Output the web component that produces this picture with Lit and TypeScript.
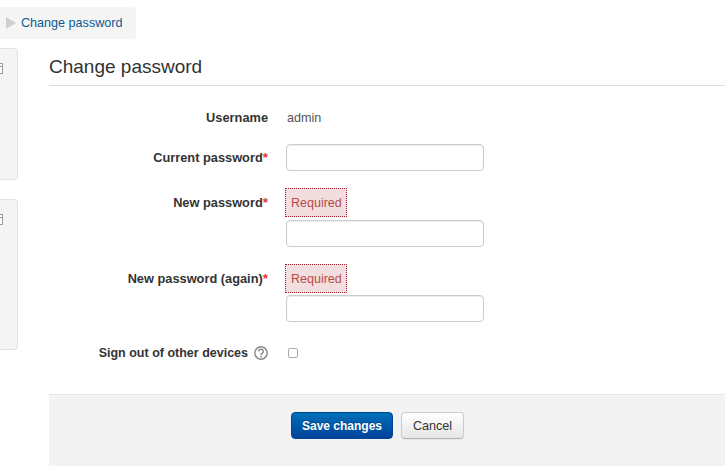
import { LitElement, html, css } from 'lit';
import { customElement } from 'lit/decorators.js';

@customElement('app-root')
export class AppRoot extends LitElement {
  static styles = css`
    :host {
      display: block;
      width: 725px;
      height: 472px;
      overflow: hidden;
      background: #fff;
      font-family: 'Liberation Sans', Arial, sans-serif;
      font-size: 12.6px;
      color: #333;
    }
    .breadcrumb {
      display: flex;
      align-items: center;
      box-sizing: border-box;
      width: 136px;
      height: 32px;
      margin-top: 7px;
      padding-left: 6px;
      background: #f5f5f5;
      border-radius: 0 4px 4px 0;
    }
    .breadcrumb .arrow {
      width: 0;
      height: 0;
      border-left: 10px solid #d0d0d0;
      border-top: 6px solid transparent;
      border-bottom: 6px solid transparent;
      margin-right: 5px;
    }
    .breadcrumb a {
      color: #0a5a96;
      text-decoration: none;
    }
    .page {
      display: grid;
      grid-template-columns: 18px 1fr;
      column-gap: 31px;
      margin-top: 9px;
    }
    .side {
      display: flex;
      flex-direction: column;
      gap: 19px;
    }
    .block {
      position: relative;
      box-sizing: border-box;
      background: #f4f4f4;
      border: 1px solid #e3e3e3;
      border-left: none;
      border-radius: 0 4px 4px 0;
    }
    .block.first { height: 132px; }
    .block.second { height: 151px; }
    .block svg {
      position: absolute;
      left: -5px;
      top: 14px;
    }
    h2 {
      margin: 0;
      height: 38px;
      box-sizing: border-box;
      padding-top: 7px;
      font-size: 19px;
      font-weight: 400;
      line-height: 23px;
      color: #333;
      border-bottom: 1px solid #ddd;
    }
    .row {
      display: grid;
      grid-template-columns: 219px 198px;
      column-gap: 18px;
    }
    .row label {
      text-align: right;
      font-size: 12.8px;
      font-weight: 700;
      line-height: 18px;
    }
    .req { color: #e33; font-weight: 700; font-size: 13.5px; }
    .username { margin-top: 23px; line-height: 18px; }
    .username .value { color: #555; padding-left: 1px; }
    .current { margin-top: 17px; align-items: center; }
    .new { margin-top: 17px; }
    .new label { padding-top: 6px; }
    .again { margin-top: 17px; }
    .again label { padding-top: 6px; }
    .controls { display: flex; flex-direction: column; align-items: flex-start; }
    .error {
      box-sizing: border-box;
      width: 62px;
      height: 29px;
      margin-left: -1px;
      margin-bottom: 3px;
      padding: 0 0 0 5px;
      font-size: 12.5px;
      line-height: 29px;
      color: #b94a48;
      background: #f2dede;
      border: 1px dotted #a02030;
    }
    .again .error { margin-bottom: 2px; }
    input.text {
      display: block;
      box-sizing: border-box;
      width: 198px;
      height: 27px;
      margin: 0;
      background: #fff;
      border: 1px solid #ccc;
      border-radius: 4px;
      box-shadow: inset 0 1px 1px rgba(0, 0, 0, 0.075);
    }
    .sign { margin-top: 22px; align-items: center; }
    .sign label {
      display: flex;
      justify-content: flex-end;
      align-items: center;
      gap: 6px;
      font-size: 12.5px;
    }
    .help { display: block; }
    .check {
      appearance: none;
      display: block;
      box-sizing: border-box;
      width: 10px;
      height: 10px;
      margin: 0 0 0 2px;
      background: #fff;
      border: 1px solid #aaa;
      border-radius: 2px;
    }
    .actions {
      display: flex;
      gap: 8px;
      box-sizing: border-box;
      height: 72px;
      margin-top: 32px;
      padding: 17px 0 0 242px;
      background: #f3f3f3;
      border-top: 1px solid #e5e5e5;
    }
    button {
      box-sizing: border-box;
      height: 27px;
      margin: 0;
      padding: 0;
      font: inherit;
      border-radius: 4px;
    }
    .save {
      width: 102px;
      color: #fff;
      font-size: 12px;
      font-weight: 700;
      background: linear-gradient(#0070b8, #00429a);
      border: 1px solid #04458f;
      text-shadow: 0 -1px 0 rgba(0, 0, 0, 0.25);
    }
    .cancel {
      width: 63px;
      color: #333;
      background: linear-gradient(#fff, #e6e6e6);
      border: 1px solid #ccc;
      border-bottom-color: #b3b3b3;
      box-shadow: 0 1px 2px rgba(0, 0, 0, 0.05);
    }
  `;

  render() {
    const pageIcon = html`<svg width="8" height="11" viewBox="0 0 8 11">
      <rect x="0.5" y="0.5" width="7" height="10" fill="#fff" stroke="#999"></rect>
      <path d="M0 3.5h8" stroke="#999"></path>
    </svg>`;
    return html`
      <div class="breadcrumb">
        <span class="arrow"></span>
        <a href="#">Change password</a>
      </div>
      <div class="page">
        <div class="side">
          <div class="block first">${pageIcon}</div>
          <div class="block second">${pageIcon}</div>
        </div>
        <main>
          <h2>Change password</h2>
          <div class="row username">
            <label>Username</label>
            <span class="value">admin</span>
          </div>
          <div class="row current">
            <label>Current password<span class="req">*</span></label>
            <input class="text" type="password" />
          </div>
          <div class="row new">
            <label>New password<span class="req">*</span></label>
            <div class="controls">
              <span class="error">Required</span>
              <input class="text" type="password" />
            </div>
          </div>
          <div class="row again">
            <label>New password (again)<span class="req">*</span></label>
            <div class="controls">
              <span class="error">Required</span>
              <input class="text" type="password" />
            </div>
          </div>
          <div class="row sign">
            <label>Sign out of other devices
              <svg class="help" width="14" height="14" viewBox="0 0 14 14">
                <circle cx="7" cy="7" r="6.2" fill="none" stroke="#8c8c8c" stroke-width="1.5"></circle>
                <path d="M4.7 5.4a2.3 2.2 0 1 1 3.5 1.9c-.8.5-1.2.9-1.2 1.7" fill="none" stroke="#8c8c8c" stroke-width="1.5"></path>
                <rect x="6.2" y="9.8" width="1.6" height="1.6" fill="#8c8c8c"></rect>
              </svg>
            </label>
            <input class="check" type="checkbox" />
          </div>
          <div class="actions">
            <button class="save">Save changes</button>
            <button class="cancel">Cancel</button>
          </div>
        </main>
      </div>
    `;
  }
}
